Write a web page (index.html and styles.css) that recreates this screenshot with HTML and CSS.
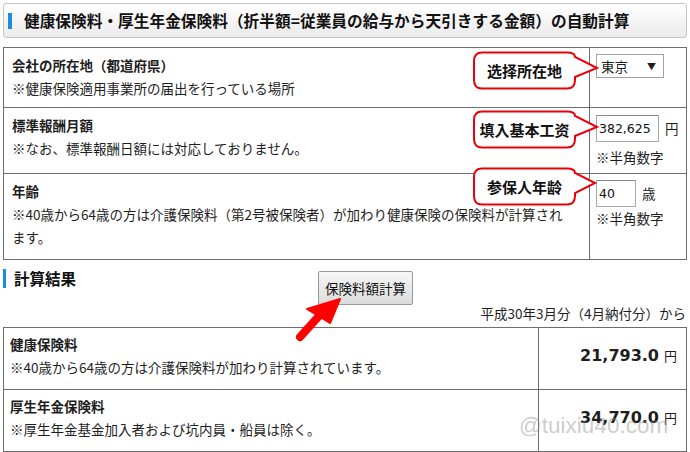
FILE: index.html
```html
<!DOCTYPE html>
<html lang="ja">

<head>
    <meta charset="UTF-8">
    <meta name="viewport" content="width=device-width, initial-scale=1.0">
    <title>健康保険料・厚生年金保険料の自動計算</title>
    <link rel="stylesheet" href="styles.css">
</head>

<body>
    <div class="page">
        <h1 class="title">健康保険料・厚生年金保険料（折半額=従業員の給与から天引きする金額）の自動計算</h1>

        <div class="form-wrap">
            <table class="form">
                <tr class="r1">
                    <td class="lab">
                        <div class="label">会社の所在地（都道府県）</div>
                        <div>※健康保険適用事業所の届出を行っている場所</div>
                    </td>
                    <td class="val">
                        <div class="select">東京<span class="caret">▼</span></div>
                    </td>
                </tr>
                <tr class="r2">
                    <td class="lab">
                        <div class="label">標準報酬月額</div>
                        <div>※なお、標準報酬日額には対応しておりません。</div>
                    </td>
                    <td class="val">
                        <div class="field"><input class="num salary" type="text" value="382,625"><span class="unit">円</span></div>
                        <div class="hint hint-salary">※半角数字</div>
                    </td>
                </tr>
                <tr class="r3">
                    <td class="lab">
                        <div class="label">年齢</div>
                        <div>※40歳から64歳の方は介護保険料（第2号被保険者）が加わり健康保険の保険料が計算されます。</div>
                    </td>
                    <td class="val">
                        <div class="field"><input class="num age" type="text" value="40"><span class="unit">歳</span></div>
                        <div class="hint">※半角数字</div>
                    </td>
                </tr>
            </table>

            <div class="callout c1">
                <svg viewBox="0 0 128 39" width="128" height="39"><path d="M10 1.5H95Q103 1.5 103 6L125 17L103 26V29Q103 37.5 95 37.5H10Q2 37.5 2 29V10Q2 1.5 10 1.5Z"/></svg>
                <span>选择所在地</span>
            </div>
            <div class="callout c2">
                <svg viewBox="0 0 128 39" width="128" height="39"><path d="M10 1.5H95Q103 1.5 103 6L125 17L103 26V29Q103 37.5 95 37.5H10Q2 37.5 2 29V10Q2 1.5 10 1.5Z"/></svg>
                <span>填入基本工资</span>
            </div>
            <div class="callout c3">
                <svg viewBox="0 0 128 39" width="128" height="39"><path d="M10 1.5H95Q103 1.5 103 6L123 16L103 26V29Q103 37.5 95 37.5H10Q2 37.5 2 29V10Q2 1.5 10 1.5Z"/></svg>
                <span>参保人年龄</span>
            </div>
        </div>

        <div class="result-head">
            <h2 class="sub">計算結果</h2>
            <button class="calc">保険料額計算</button>
        </div>
        <p class="date">平成30年3月分（4月納付分）から</p>

        <table class="result">
            <tr class="rr">
                <td class="lab">
                    <div class="label">健康保険料</div>
                    <div>※40歳から64歳の方は介護保険料が加わり計算されています。</div>
                </td>
                <td class="amount"><b>21,793.0</b><span class="yen">円</span></td>
            </tr>
            <tr class="rr">
                <td class="lab">
                    <div class="label">厚生年金保険料</div>
                    <div>※厚生年金基金加入者および坑内員・船員は除く。</div>
                </td>
                <td class="amount"><b>34,770.0</b><span class="yen">円</span></td>
            </tr>
        </table>

        <svg class="arrow" viewBox="0 0 52 50" width="52" height="50">
            <line x1="8" y1="43" x2="27" y2="22"/>
            <polygon points="48,5 15,15 38,29"/>
        </svg>

        <div class="watermark">@tuixiu40.com</div>
    </div>
</body>

</html>
```

FILE: styles.css
```css
body {
    margin: 0;
    font-family: "Noto Sans CJK JP", sans-serif;
    font-size: 13.5px;
    color: #1e1e1e;
    background: #fff;
}

.page {
    position: relative;
    padding: 3px;
}

.title {
    display: flex;
    align-items: center;
    gap: 12px;
    height: 35px;
    box-sizing: border-box;
    margin: 0;
    padding-left: 4px;
    border: 1px solid #c6c6c6;
    border-radius: 3px;
    background: linear-gradient(#ffffff, #ebebeb);
    font-size: 15.7px;
    font-weight: bold;
    color: #111;
}

.title::before {
    content: "";
    width: 4px;
    height: 16px;
    background: #1b8ee0;
}

.form-wrap {
    position: relative;
    margin-top: 9px;
}

table {
    width: 100%;
    border-collapse: collapse;
}

td {
    border: 1px solid #6e6e6e;
    vertical-align: top;
}

.lab {
    padding: 6px 8px;
    line-height: 23px;
}

.form .lab {
    padding-right: 20px;
}

.label {
    font-weight: bold;
}

.r1 {
    height: 60px;
}

.r2 {
    height: 66px;
}

.r3 {
    height: 86px;
}

.val {
    width: 90px;
    padding: 6px 0 0 6px;
    line-height: 23px;
}

.select {
    display: flex;
    justify-content: space-between;
    align-items: center;
    width: 68px;
    height: 24px;
    box-sizing: border-box;
    padding: 0 7px 0 4px;
    border: 1px solid #a3a3a3;
    background: #fff;
}

.caret {
    font-size: 9px;
}

.field {
    display: flex;
    align-items: center;
    gap: 6px;
}

.num {
    height: 27px;
    box-sizing: border-box;
    margin: 0;
    padding: 0 2px;
    border: 1px solid #a9a9a9;
    border-top-color: #8a8a8a;
    font-family: "DejaVu Sans", sans-serif;
    font-size: 12.5px;
    color: #111;
}

.salary {
    width: 63px;
    margin-top: 1px;
}

.age {
    width: 40px;
}

.hint-salary {
    margin-top: 4px;
}

.callout {
    position: absolute;
    left: 469px;
    width: 128px;
    height: 39px;
}

.callout svg {
    display: block;
}

.callout path {
    fill: #fff;
    stroke: #e8000b;
    stroke-width: 2;
}

.callout span {
    position: absolute;
    top: 1px;
    left: 2px;
    width: 101px;
    height: 36px;
    display: flex;
    align-items: center;
    justify-content: center;
    font-family: "Noto Sans CJK SC", sans-serif;
    font-size: 15px;
    font-weight: bold;
    color: #111;
}

.c1 {
    top: 4px;
}

.c2 {
    top: 63px;
}

.c3 {
    top: 120px;
}

.result-head {
    display: flex;
    align-items: flex-start;
    height: 42px;
}

.sub {
    display: flex;
    align-items: center;
    gap: 8px;
    width: 315px;
    margin: 8px 0 0;
    font-size: 15.5px;
    line-height: 20px;
    color: #111;
}

.sub::before {
    content: "";
    width: 3px;
    height: 19px;
    background: #1b8ee0;
}

.calc {
    width: 95px;
    height: 34px;
    margin-top: 11px;
    padding: 0;
    border: 1px solid #999;
    border-radius: 2px;
    background: linear-gradient(#f6f6f6, #dcdcdc);
    font-family: "Noto Sans CJK JP", sans-serif;
    font-size: 13.5px;
    color: #111;
}

.date {
    margin: 0 0 2px;
    text-align: right;
    line-height: 23px;
    padding-right: 1px;
}

.rr {
    height: 62px;
}

.result .lab {
    padding: 5px 6px;
}

.amount {
    width: 138px;
    padding: 16px 9px 0 0;
    text-align: right;
    line-height: 23px;
    font-size: 13px;
}

.amount b {
    font-family: "DejaVu Sans", sans-serif;
    font-size: 16px;
}

.yen {
    margin-left: 5px;
}

.arrow {
    position: absolute;
    left: 292px;
    top: 294px;
}

.arrow line {
    stroke: #f00;
    stroke-width: 8;
    stroke-linecap: round;
}

.arrow polygon {
    fill: #f00;
    stroke: #f00;
    stroke-width: 2;
    stroke-linejoin: round;
}

.watermark {
    position: absolute;
    left: 519px;
    top: 413px;
    font-family: "Liberation Sans", sans-serif;
    font-size: 22.5px;
    color: rgba(140, 140, 140, 0.45);
}
```
